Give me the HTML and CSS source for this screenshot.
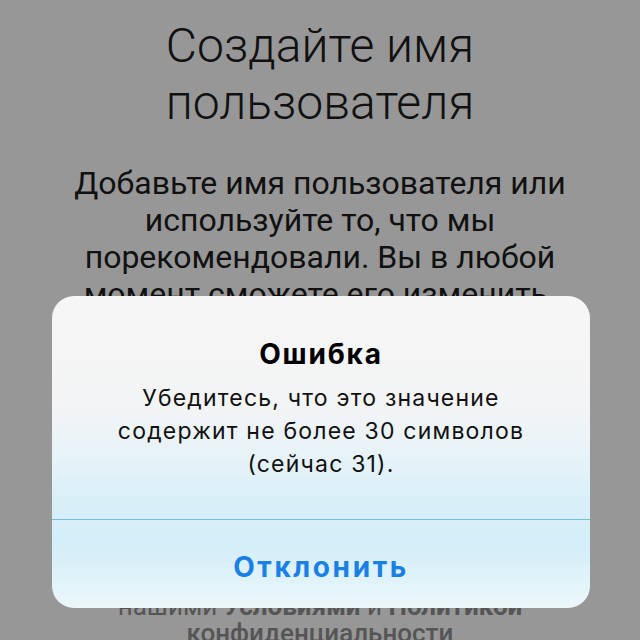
FILE: index.html
```html
<!DOCTYPE html>
<html lang="ru">

<head>
    <meta charset="UTF-8" />
    <meta name="viewport" content="width=device-width, initial-scale=1.0" />
    <title>Создайте имя пользователя</title>
    <link rel="stylesheet" href="styles.css">
</head>

<body>
    <div class="screen">
        <h1 class="title">Создайте имя пользователя</h1>
        <p class="lead">Добавьте имя пользователя или используйте то, что мы порекомендовали. Вы в любой момент сможете его изменить.</p>
        <div class="terms">
            <p>Регистрируясь, вы принимаете<br>наши условия. Подробнее в<br>нашими <b>Условиями</b> и <b>Политикой</b><br><b class="light">конфиденциальности</b></p>
        </div>
    </div>

    <div class="alert">
        <div class="alert-body">
            <div class="alert-title">Ошибка</div>
            <div class="alert-text">Убедитесь, что это значение содержит не более 30 символов (сейчас 31).</div>
        </div>
        <button class="alert-button">Отклонить</button>
    </div>
</body>

</html>
```

FILE: styles.css
```css
body {
    margin: 0;
    height: 640px;
    overflow: hidden;
    background: #979797;
    font-family: 'Roboto', sans-serif;
    position: relative;
}

.screen {
    display: flex;
    flex-direction: column;
    align-items: center;
    text-align: center;
    padding-top: 17px;
}

.title {
    margin: 0;
    width: 360px;
    font-size: 48px;
    font-weight: 300;
    line-height: 57px;
    color: #111;
}

.lead {
    margin: 34px 0 0;
    width: 520px;
    font-size: 32px;
    font-weight: 400;
    line-height: 37px;
    color: #111;
}

.terms {
    height: 334px;
    display: flex;
    align-items: flex-end;
}

.terms p {
    margin: 0;
    font-size: 26px;
    line-height: 27px;
    color: #555;
}

.terms b {
    font-weight: 700;
}

.terms b.light {
    font-weight: 500;
}

.alert {
    position: absolute;
    left: 52px;
    top: 296px;
    width: 538px;
    height: 312px;
    border-radius: 22px;
    overflow: hidden;
    display: flex;
    flex-direction: column;
    font-family: 'Inter', sans-serif;
    text-align: center;
    background: linear-gradient(180deg, #f6f6f6 0%, #f3f4f5 35%, #e6f3f8 52%, #d8eff8 66%, #d3eef8 80%, #e2f3fa 92%, #edf7fb 100%);
}

.alert-body {
    height: 224px;
    padding: 42px 20px 0;
    box-sizing: border-box;
    border-bottom: 1px solid #78c0d8;
}

.alert-title {
    font-size: 28px;
    font-weight: 700;
    line-height: 32px;
    letter-spacing: 1.8px;
    color: #000;
}

.alert-text {
    margin-top: 12px;
    padding: 0 40px;
    font-size: 23px;
    line-height: 33px;
    letter-spacing: 1.2px;
    color: #111;
}

.alert-button {
    flex: 1;
    border: none;
    background: none;
    font-family: 'Inter', sans-serif;
    font-size: 28px;
    font-weight: 700;
    letter-spacing: 2.6px;
    color: #1b80e6;
    padding: 6px 0 0;
}
```
